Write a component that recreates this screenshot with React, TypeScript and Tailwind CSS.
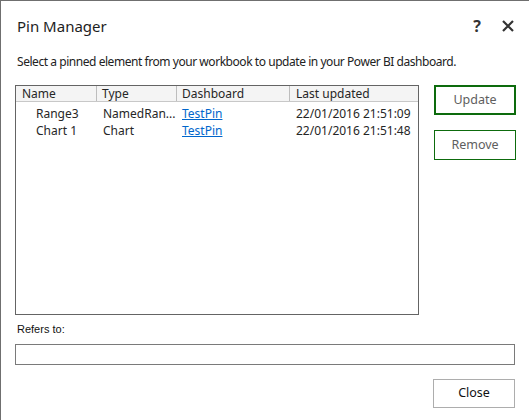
import React from "react";

const seg = { fontFamily: '"Noto Sans", "Open Sans", sans-serif' } as React.CSSProperties;

export default function App() {
  const rows = [
    { name: "Range3", type: "NamedRan...", dash: "TestPin", upd: "22/01/2016 21:51:09" },
    { name: "Chart 1", type: "Chart", dash: "TestPin", upd: "22/01/2016 21:51:48" },
  ];
  return (
    <div
      className="w-[529px] h-[420px] bg-white border-l border-t border-[#6f6f6f] box-border overflow-hidden flex flex-col text-[#262626]"
      style={seg}
    >
      <div className="flex items-center justify-between h-[22px] mt-[14px] pl-[16px] pr-[15px]">
        <span className="text-[15px] leading-[22px] text-[#1e1e1e]">Pin Manager</span>
        <div className="flex items-center gap-[21px]">
          <span className="text-[16px] font-bold leading-[22px] text-[#333]">?</span>
          <svg width="12" height="12" viewBox="0 0 12 12">
            <path d="M1 1 L11 11 M11 1 L1 11" stroke="#333" strokeWidth="2.2" />
          </svg>
        </div>
      </div>
      <div className="pl-[16px] mt-[17px] text-[12px] leading-[16px] tracking-[-0.45px] text-[#222]">
        Select a pinned element from your workbook to update in your Power BI dashboard.
      </div>
      <div className="flex pl-[14px] mt-[15px]">
        <div className="w-[404px] h-[230px] border border-[#646464] box-border text-[12px] leading-[16px]">
          <div className="flex h-[16px] bg-[#f4f4f4] border-b border-[#c8c8c8]">
            <div className="w-[81px] pl-[6px] border-r border-[#bdbdbd]">Name</div>
            <div className="w-[80px] pl-[5px] border-r border-[#bdbdbd]">Type</div>
            <div className="w-[113px] pl-[5px] border-r border-[#bdbdbd]">Dashboard</div>
            <div className="flex-1 pl-[6px]">Last updated</div>
          </div>
          <div className="pt-[3px]">
            {rows.map((r) => (
              <div key={r.name} className="flex h-[17px] items-center">
                <div className="w-[81px] pl-[20px]">{r.name}</div>
                <div className="w-[80px] pl-[6px]">{r.type}</div>
                <div className="w-[113px] pl-[5px]">
                  <span className="text-[#0066cc] underline">{r.dash}</span>
                </div>
                <div className="flex-1 pl-[6px]">{r.upd}</div>
              </div>
            ))}
          </div>
        </div>
        <div className="flex flex-col ml-[15px] w-[82px]">
          <div className="h-[30px] border-2 border-[#0d6b0d] box-border flex items-center justify-center text-[12.5px] text-[#5e5e5e]">
            Update
          </div>
          <div className="h-[30px] mt-[15px] border border-[#0d6b0d] box-border flex items-center justify-center text-[12.5px] text-[#5e5e5e]">
            Remove
          </div>
        </div>
      </div>
      <div
        className="pl-[16px] mt-[8px] text-[11px] leading-[13px] text-[#111]"
        style={{ fontFamily: '"Liberation Sans", Arial, sans-serif' }}
      >
        Refers to:
      </div>
      <div className="pl-[14px] mt-[8px]">
        <div className="w-[500px] h-[21px] border border-[#7a7a7a] box-border" />
      </div>
      <div className="flex justify-end pr-[14px] mt-[14px]">
        <div className="w-[82px] h-[29px] border border-[#adadad] box-border flex items-center justify-center text-[12.5px] text-[#111]">
          Close
        </div>
      </div>
    </div>
  );
}
